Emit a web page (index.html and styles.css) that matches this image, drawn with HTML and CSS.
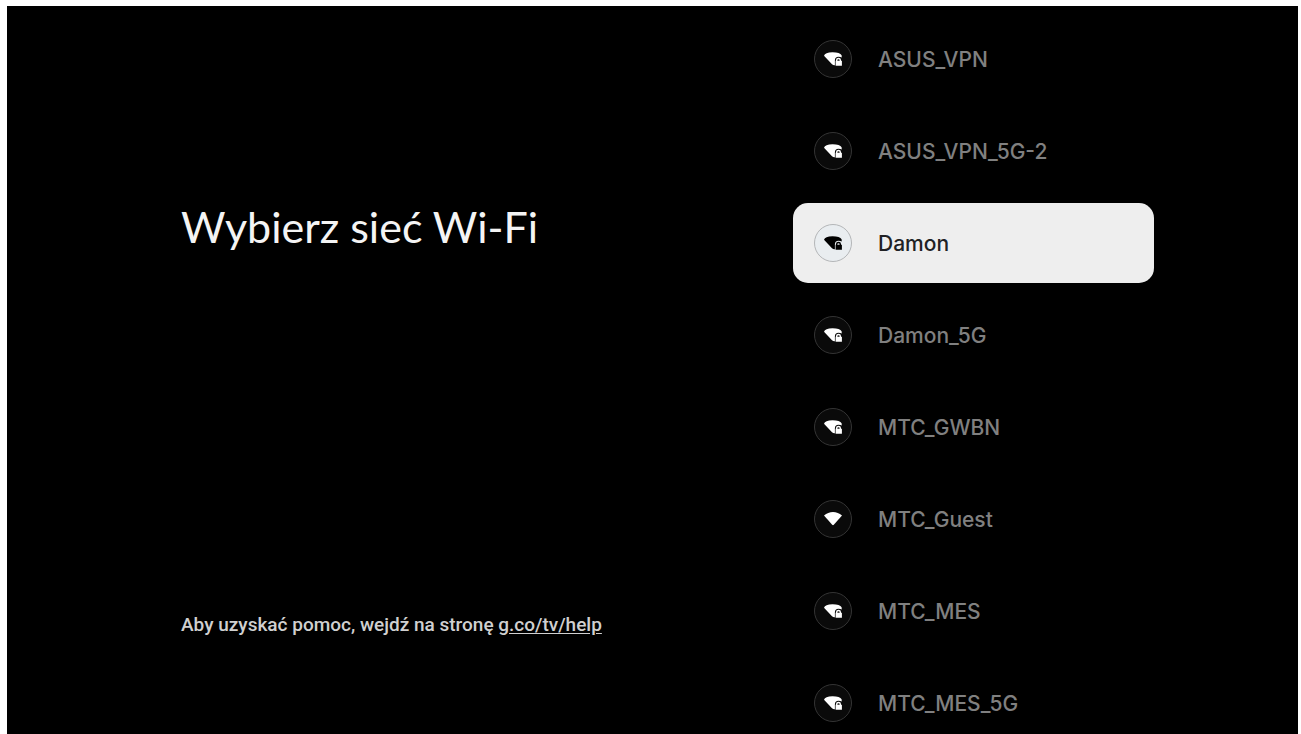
FILE: index.html
```html
<!DOCTYPE html>
<html lang="pl">
<head>
<meta charset="utf-8">
<meta name="viewport" content="width=device-width, initial-scale=1">
<title>Wybierz sieć Wi-Fi</title>
<link rel="stylesheet" href="styles.css">
</head>
<body>
<svg class="sprite" aria-hidden="true">
  <symbol id="wifi-lock" viewBox="0 0 18 14">
    <path d="M0 3.700Q1 .5 8.500 .2 16 .3 17.600 3.200L17.800 5.600Q16.500 4.700 14.500 4.700 10.900 4.700 10.900 8.200V13.200Q9.300 13.400 8 12.300Z"/>
    <path d="M12 8.800V8q0-2.300 2.500-2.300T17 8v.8h.9v4.900h-6.300V8.800Zm1.400 0h2.200V8q0-.8-1.100-.8T13.400 8Z"/>
  </symbol>
  <symbol id="wifi-open" viewBox="0 0 18 14">
    <path d="M0 3.600Q4 0 9 0t9 3.600L9.800 12.800q-.8.800-1.600 0Z"/>
  </symbol>
</svg>
<main class="screen">
  <section class="intro">
    <h1 class="title">Wybierz sieć Wi-Fi</h1>
    <p class="help">Aby uzyskać pomoc, wejdź na stronę <a class="help-link" href="#help">g.co/tv/help</a></p>
  </section>
  <ul class="networks">
    <li><button class="network" type="button"><span class="badge"><svg class="icon" aria-hidden="true"><use href="#wifi-lock"/></svg></span><span class="name">ASUS_VPN</span></button></li>
    <li><button class="network" type="button"><span class="badge"><svg class="icon" aria-hidden="true"><use href="#wifi-lock"/></svg></span><span class="name">ASUS_VPN_5G-2</span></button></li>
    <li><button class="network selected" type="button"><span class="badge"><svg class="icon" aria-hidden="true"><use href="#wifi-lock"/></svg></span><span class="name">Damon</span></button></li>
    <li><button class="network" type="button"><span class="badge"><svg class="icon" aria-hidden="true"><use href="#wifi-lock"/></svg></span><span class="name">Damon_5G</span></button></li>
    <li><button class="network" type="button"><span class="badge"><svg class="icon" aria-hidden="true"><use href="#wifi-lock"/></svg></span><span class="name">MTC_GWBN</span></button></li>
    <li><button class="network" type="button"><span class="badge"><svg class="icon" aria-hidden="true"><use href="#wifi-open"/></svg></span><span class="name">MTC_Guest</span></button></li>
    <li><button class="network" type="button"><span class="badge"><svg class="icon" aria-hidden="true"><use href="#wifi-lock"/></svg></span><span class="name">MTC_MES</span></button></li>
    <li><button class="network" type="button"><span class="badge"><svg class="icon" aria-hidden="true"><use href="#wifi-lock"/></svg></span><span class="name">MTC_MES_5G</span></button></li>
  </ul>
</main>
</body>
</html>
```
FILE: styles.css
```css
* { box-sizing: border-box; }
body {
  margin: 0;
  height: 100vh;
  padding: 6px 3px 0 7px;
  background: #fff;
  overflow: hidden;
}
.sprite { position: absolute; width: 0; height: 0; }
.screen {
  display: grid;
  grid-template-columns: 1fr 361px;
  height: 100%;
  padding: 0 144px 0 174px;
  background: #000;
  color: #f4f4f4;
  overflow: hidden;
}
.intro {
  display: flex;
  flex-direction: column;
  justify-content: space-between;
  padding: 194px 0 104px;
}
.title {
  margin: 0;
  font: 400 43px/54px Lato, sans-serif;
}
.help {
  margin: 0;
  font: 500 19px/28px Roboto, sans-serif;
  color: #d0d0d0;
}
.help-link { color: inherit; text-underline-offset: 2px; }
.networks {
  display: flex;
  flex-direction: column;
  gap: 12px;
  margin: 0;
  padding: 13px 0 0;
  list-style: none;
}
.network {
  display: flex;
  align-items: center;
  gap: 26px;
  width: 100%;
  height: 80px;
  padding: 0 21px;
  border: 0;
  border-radius: 15px;
  background: transparent;
  color: #808080;
  font: 500 21px/28px Inter, sans-serif;
  text-align: left;
}
.name { padding-top: 2px; }
.badge {
  display: grid;
  place-items: center;
  width: 38px;
  height: 38px;
  border: 1px solid #343434;
  border-radius: 50%;
  background: #0a0a0a;
  color: #fff;
}
.icon { width: 18px; height: 14px; fill: currentColor; }
.selected { background: #eee; color: #202124; }
.selected .badge { border-color: #b4b6b8; background: #e9edf0; color: #000; }
```
